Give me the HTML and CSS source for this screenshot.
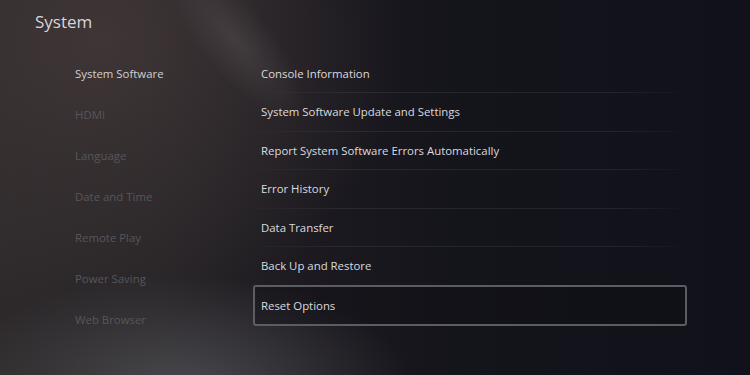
FILE: index.html
```html
<!DOCTYPE html>
<html lang="en">
<head>
<meta charset="utf-8">
<title>System</title>
<link rel="stylesheet" href="styles.css">
</head>
<body>
<div class="screen">
  <div class="glow"></div>
  <h1 class="title">System</h1>
  <div class="columns">
    <nav class="nav">
      <div class="nav-item active">System Software</div>
      <div class="nav-item">HDMI</div>
      <div class="nav-item">Language</div>
      <div class="nav-item">Date and Time</div>
      <div class="nav-item">Remote Play</div>
      <div class="nav-item">Power Saving</div>
      <div class="nav-item">Web Browser</div>
    </nav>
    <div class="list">
      <div class="row">Console Information</div>
      <div class="row">System Software Update and Settings</div>
      <div class="row">Report System Software Errors Automatically</div>
      <div class="row">Error History</div>
      <div class="row">Data Transfer</div>
      <div class="row">Back Up and Restore</div>
      <div class="row focused">Reset Options</div>
    </div>
  </div>
</div>
</body>
</html>
```

FILE: styles.css
```css
html, body {
  margin: 0;
  padding: 0;
}
body {
  width: 750px;
  height: 375px;
  overflow: hidden;
  font-family: "Open Sans", "Noto Sans", sans-serif;
}
.screen {
  position: relative;
  width: 750px;
  height: 375px;
  overflow: hidden;
  background:
    radial-gradient(ellipse 230px 110px at 180px 385px, rgba(80,80,84,0.8), rgba(80,80,84,0) 100%),
    radial-gradient(ellipse 300px 280px at 100px 40px, rgba(66,56,56,0.85), rgba(66,56,56,0) 100%),
    linear-gradient(90deg, #2d292b 0%, #272427 22%, #1c1a20 42%, #14141b 62%, #10111a 100%);
  box-sizing: border-box;
}
.glow {
  position: absolute;
  left: 200px;
  top: -60px;
  width: 70px;
  height: 200px;
  background: radial-gradient(ellipse at center, rgba(88,82,86,0.45), rgba(88,82,86,0) 70%);
  transform: rotate(-40deg);
  pointer-events: none;
}
.title {
  position: relative;
  margin: 0;
  padding: 9px 0 0 35px;
  height: 43px;
  box-sizing: border-box;
  font-size: 17px;
  font-weight: 400;
  color: #d6d6da;
  line-height: 26px;
}
.columns {
  position: relative;
  display: flex;
  padding-left: 75px;
}
.nav {
  width: 178px;
  display: flex;
  flex-direction: column;
  padding-top: 10px;
}
.nav-item {
  height: 41px;
  line-height: 41px;
  font-size: 11.4px;
  color: #57565b;
  white-space: nowrap;
}
.nav-item.active {
  color: #d0d0d4;
}
.list {
  width: 434px;
  display: flex;
  flex-direction: column;
  padding-top: 11.5px;
}
.row {
  height: 38.5px;
  line-height: 38.5px;
  padding-left: 8px;
  font-size: 11.4px;
  color: #dadade;
  white-space: nowrap;
  box-sizing: border-box;
  position: relative;
}
.row:not(:last-child):not(:nth-last-child(2))::after {
  content: "";
  position: absolute;
  left: 2px;
  right: 2px;
  bottom: 0;
  height: 1px;
  background: linear-gradient(90deg, rgba(60,60,70,0.1), rgba(60,60,70,0.45) 20%, rgba(55,55,66,0.45) 85%, rgba(55,55,66,0.05));
}
.row.focused {
  height: 41px;
  line-height: 37px;
  border: 2px solid #5c5c62;
  border-radius: 3px;
  padding-left: 6px;
  margin-top: -1px;
  background: rgba(14,14,20,0.35);
}
```
